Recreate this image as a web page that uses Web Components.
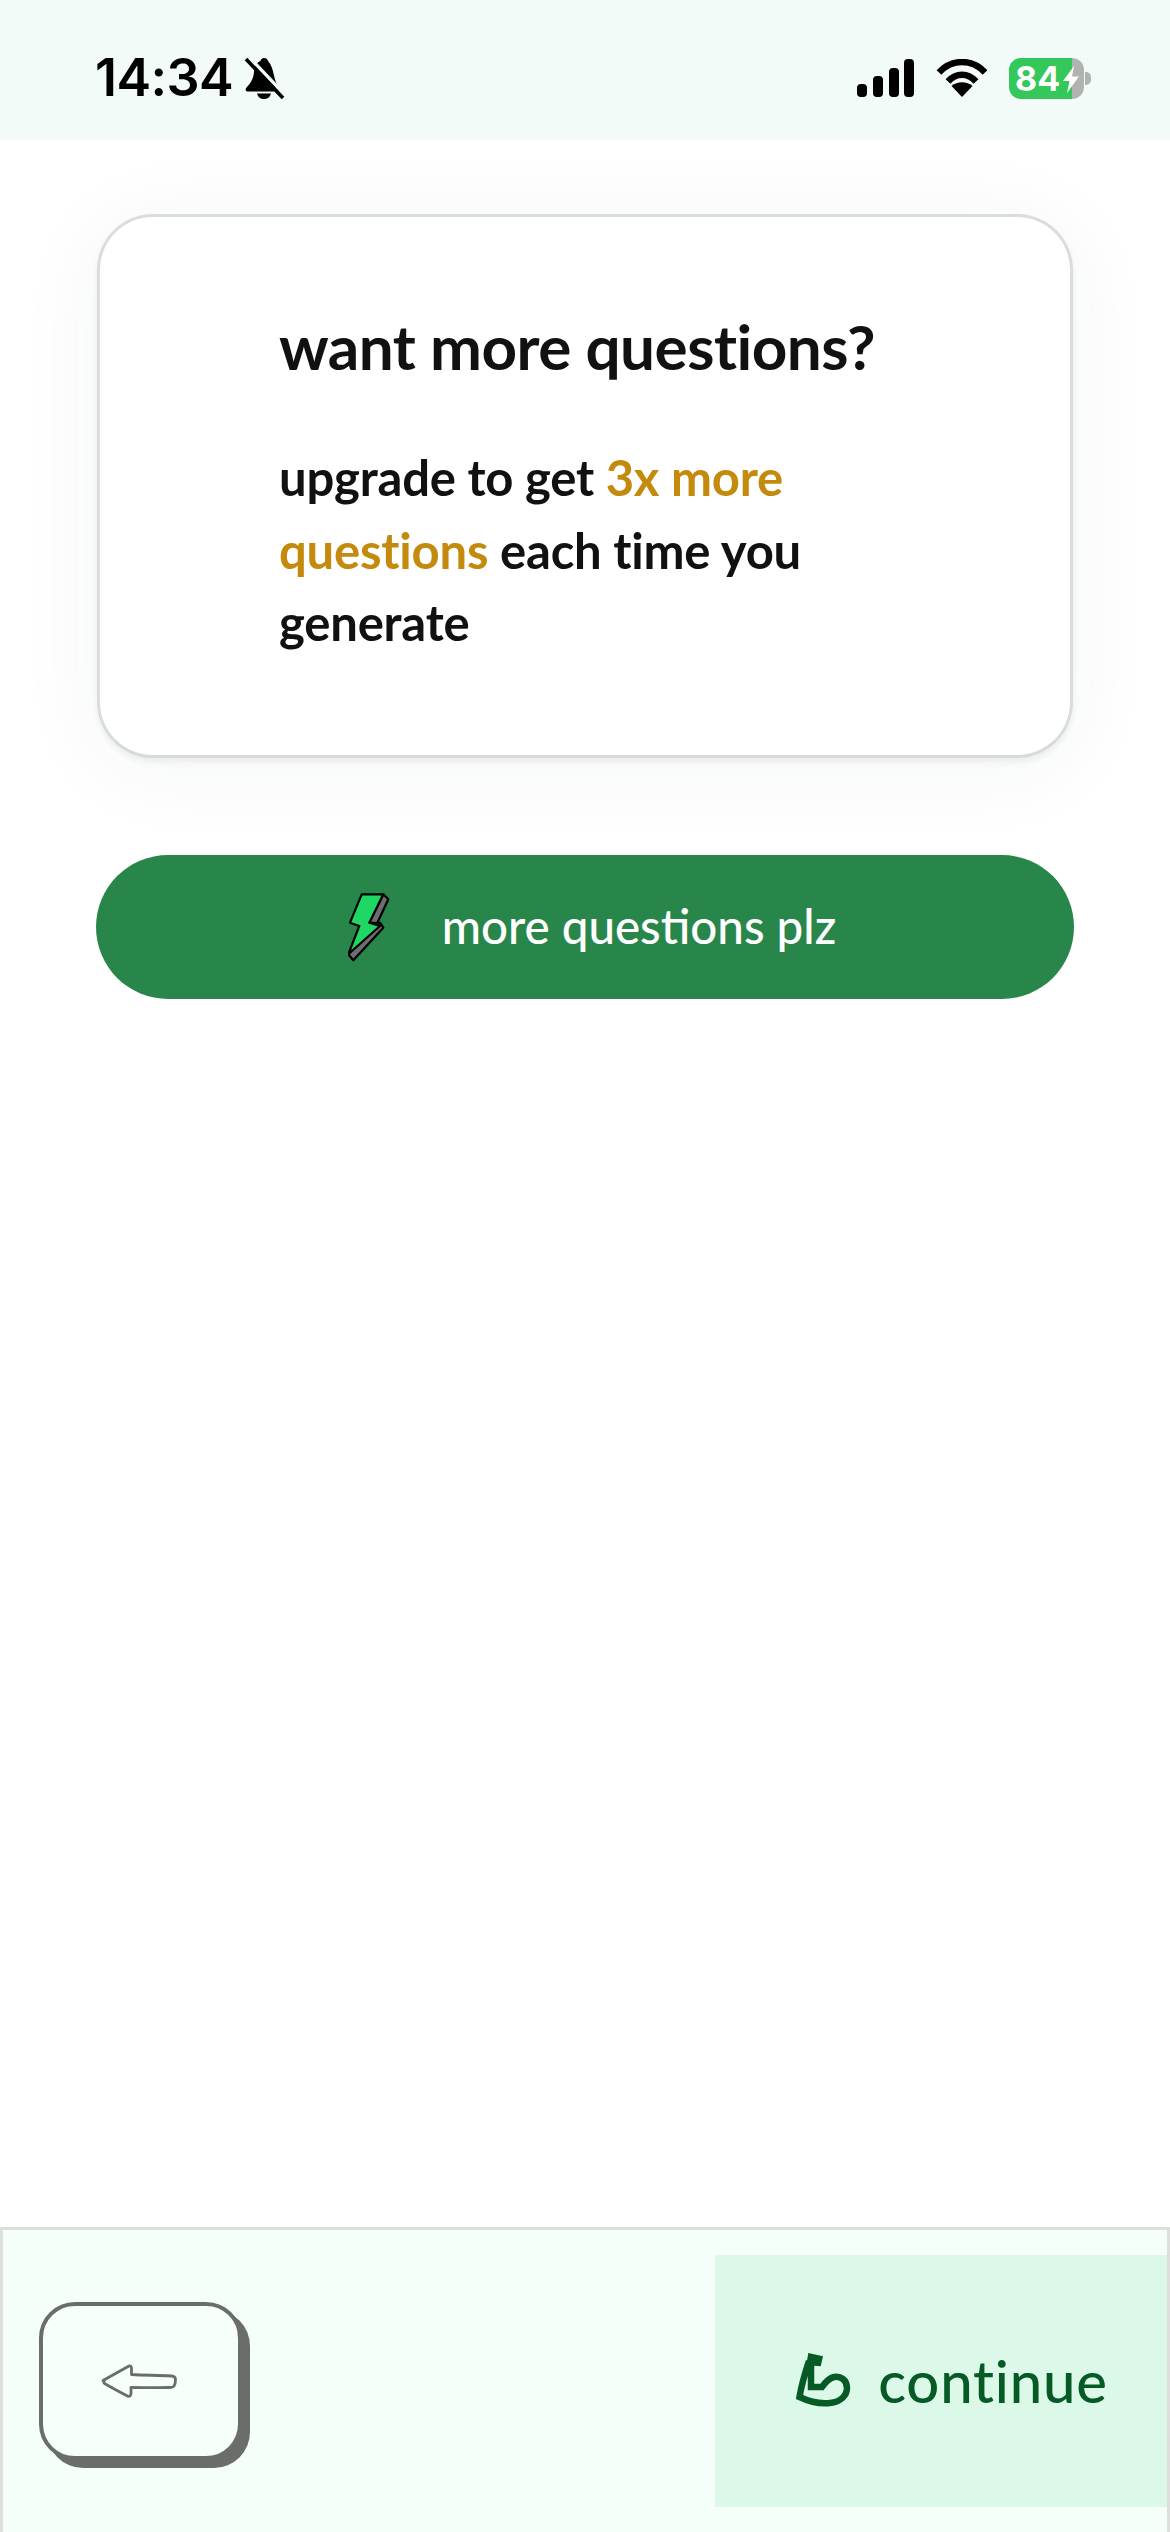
<!doctype html>
<html><head><meta charset="utf-8">
<style>html,body{margin:0;padding:0;background:#fff;font-family:Lato,"Open Sans",sans-serif}</style>
</head><body>
<app-screen>
  <status-bar slot="top"></status-bar>
  <promo-card slot="main">
    <span slot="title">want more questions?</span>
    upgrade to get <em>3x more</em><br><em>questions</em> each time you<br>generate
  </promo-card>
  <upgrade-button slot="main">more questions plz</upgrade-button>
  <bottom-bar slot="bottom"></bottom-bar>
</app-screen>
<script>
function def(name, html){
  customElements.define(name, class extends HTMLElement{
    constructor(){super();this.attachShadow({mode:'open'}).innerHTML=html;}
  });
}
def('app-screen',`<style>
:host{display:flex;flex-direction:column;height:2532px;width:1170px;overflow:hidden;background:#fff}
main{flex:1;display:flex;flex-direction:column;gap:97px;padding:74px 96px 0}
</style><slot name="top"></slot><main><slot name="main"></slot></main><slot name="bottom"></slot>`);

def('status-bar',`<style>
:host{display:flex;align-items:center;justify-content:space-between;height:140px;background:#f2fbf7;color:#000;box-sizing:border-box;padding:16px 78px 0 95px;position:relative;z-index:1}
.l,.r{display:flex;align-items:center}
.time{font:600 52px/1 Inter,"Liberation Sans",sans-serif;letter-spacing:-.6px}
.bell{margin-left:11px}
.bat{position:relative;width:75px;height:41px;margin-left:21px;margin-right:8px}
.bat i{position:absolute;inset:0;border-radius:12px;background:linear-gradient(90deg,#34c759 0 84%,#b1b3b1 84%)}
.bat b{position:absolute;left:6px;top:0;font:700 34px/41px Inter,"Liberation Sans",sans-serif;color:#fff;letter-spacing:.2px}
.bat svg{position:absolute;left:54px;top:8px}
.bat u{position:absolute;right:-7px;top:14px;width:6px;height:13px;border-radius:0 5px 5px 0;background:#b1b3b1}
</style>
<div class="l"><span class="time">14:34</span>
<svg class="bell" width="42" height="44" viewBox="0 0 42 44"><path d="M20 2c-2 0-3.200 1.400-3.500 3C12 7 10.500 11 10 16c-.5 5-2 10-7.500 15.500-1.500 2-1 4 1.500 4h29c2.500 0 3.500-1.500 2.500-3.500C29 26 30.500 11 24 5c-.5-1.800-2-3-4-3zM13 37.500h14c-1 3.800-3.500 5.500-7 5.500s-6-1.700-7-5.500z" fill="#000"/><path d="M5 1l36 38" stroke="#f2fbf7" stroke-width="3.500"/><path d="M2 3l37 39" stroke="#000" stroke-width="3.600"/></svg></div>
<div class="r">
<svg width="60" height="38" viewBox="0 0 60 38"><g fill="#000"><rect x="1" y="25" width="10" height="13" rx="4"/><rect x="17" y="17" width="10" height="21" rx="4"/><rect x="33" y="9" width="10" height="29" rx="4"/><rect x="48" y="0" width="10" height="38" rx="4"/></g></svg>
<svg style="margin-left:20px" width="52" height="38" viewBox="0 0 52 38"><g fill="none" stroke="#000" stroke-width="6.500"><path d="M3 13.500C16-.5 36-.5 49 13.500"/><path d="M12 22.500C20 13.500 32 13.500 40 22.500"/></g><path d="M15.500 27c6-5 15-5 21 0L26 38z" fill="#000"/></svg>
<div class="bat"><i></i><b>84</b><svg width="16" height="27" viewBox="0 0 16 27"><path d="M11 0L0 15h6.500L4 27 16 10.500H9z" fill="#fff"/></svg><u></u></div>
</div>`);

def('promo-card',`<style>
:host{display:block;box-sizing:border-box;height:544px;margin:0 1px;border:3px solid #d9dedc;border-bottom-color:#d6dad8;border-radius:56px;background:#fff;padding:0 100px 0 179px;color:#111;
box-shadow:0 4px 6px rgba(0,0,0,.06),0 10px 90px rgba(40,60,50,.05)}
h1{margin:0;padding-top:92px;font:700 62px/1.2 Lato,sans-serif;letter-spacing:-.5px;color:#111;white-space:nowrap}
p{margin:58px 0 0;font:700 49px/72.500px Lato,sans-serif;letter-spacing:-.2px;white-space:nowrap}
::slotted(em){font-style:normal;color:#c48a0e}
</style><h1><slot name="title"></slot></h1><p><slot></slot></p>`);

def('upgrade-button',`<style>
:host{display:flex;align-items:center;justify-content:center;gap:52px;height:144px;border-radius:72px;background:#29864b;color:#fff;font:500 47.500px/1 Lato,sans-serif;padding-left:14px;position:relative;z-index:1}
span{margin-top:-2px}
</style>
<svg width="42" height="69" viewBox="0 0 42 69" style="flex:none"><g stroke="#000" stroke-width="2.200" stroke-linejoin="round"><path d="M35.300 1.300L40.300 6.300 29.300 30 21.300 29.700z" fill="#6f6b72"/><path d="M32 29.700L35.300 34.700 5.300 67.300.3 61.300z" fill="#6f6b72"/><path d="M13.700 1.300H35.300L21.300 29.700 32 33 .3 61.300 11.300 33 2 29.700z" fill="#1fd764"/></g></svg>
<span><slot></slot></span>`);

def('bottom-bar',`<style>
:host{display:flex;align-items:center;justify-content:space-between;box-sizing:border-box;height:305px;background:#f4fff9;border:solid #dbe0dd;border-width:3px 3px 0 3px;padding:0 0 0 36px;position:relative}
.back{box-sizing:border-box;display:flex;align-items:center;justify-content:center;width:203px;height:158px;border:4.500px solid #6b6d6b;border-radius:36px;background:#f6fffa;box-shadow:8px 8px 0 #6b6d6b;padding-right:3px}
.cont{display:flex;align-items:center;justify-content:center;gap:27px;box-sizing:border-box;width:452px;height:252px;background:#dcf8e8;color:#055a26;font:500 58px/1 Lato,sans-serif;letter-spacing:.8px;padding-left:22px}
.cont svg{flex:none;margin-top:-2px}
</style>
<div class="back"><svg width="76" height="34" viewBox="0 0 76 34"><path d="M2 16.500L28 2c1.500-.5 2.500.5 2.500 2v6.500c13 1 26 .5 40 1.500 3 .2 4 1.500 4 3.500 0 3-.5 5-1.500 6.500-.8 1.200-2.500 1.500-5 1.500-12 0-25 .2-38 0v6c0 2-1.500 3.500-3.500 2.500-7-3.500-16-8.500-23-12.500-1-.8-1-2 0-3z" fill="none" stroke="#6b6d6b" stroke-width="2.800" stroke-linejoin="round"/></svg></div>
<div class="cont"><svg width="55" height="54" viewBox="0 0 55 54"><path d="M12.300 0L27 3.300 24.700 13.300 10.300 12.300z" fill="#055a26"/><path d="M13 8C9 20 5.500 32 3.500 44 14 49 25 51 34 50 45 49 51 42 51 35 51 27 45 23 38 24 33 25 29.500 29 26 34H15V12" fill="none" stroke="#055a26" stroke-width="6.500"/></svg><span>continue</span></div>`);
</script>
</body></html>
